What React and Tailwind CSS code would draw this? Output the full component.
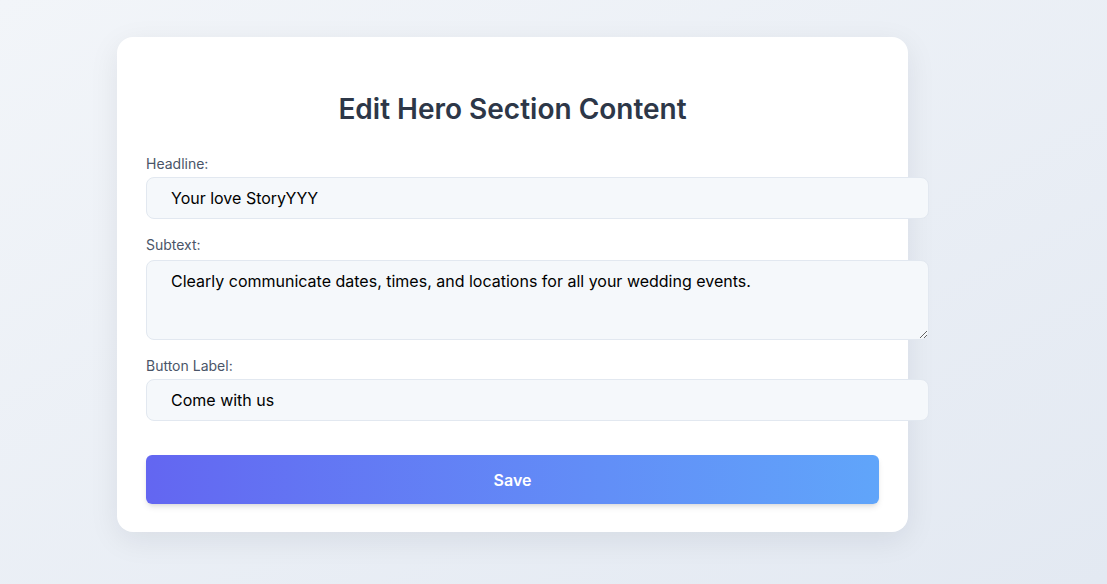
export default function App() {
  const field =
    "box-content w-full px-6 py-2 text-base leading-6 text-black bg-[#f5f8fb] border border-[#e2e8f0] rounded-lg outline-none";
  return (
    <div
      className="min-h-[584px] w-full bg-gradient-to-br from-[#f2f5f9] to-[#e3e9f2] pt-[37px] pl-[117px]"
      style={{ fontFamily: "Inter, 'Noto Sans', sans-serif" }}
    >
      <div className="w-[791px] bg-white rounded-2xl shadow-[0_8px_30px_rgba(15,23,42,0.08)] px-[29px] pt-[54px] pb-[28px]">
        <h2 className="text-center text-[28px] leading-9 font-semibold text-[#2d3748] mb-[27px]">
          Edit Hero Section Content
        </h2>
        <label className="block text-sm leading-5 text-[#4a5568] mb-[3px]">Headline:</label>
        <input className={field} defaultValue="Your love StoryYYY" />
        <label className="block text-sm leading-5 text-[#4a5568] mt-4 mb-[5px]">Subtext:</label>
        <textarea
          className={field + " h-[62px] block resize-y"}
          defaultValue="Clearly communicate dates, times, and locations for all your wedding events."
        />
        <label className="block text-sm leading-5 text-[#4a5568] mt-[16px] mb-[3px]">Button Label:</label>
        <input className={field} defaultValue="Come with us" />
        <button className="mt-[34px] w-full h-[49px] rounded-md bg-gradient-to-r from-[#6366f1] to-[#60a5fa] text-white font-semibold text-base shadow-md">
          Save
        </button>
      </div>
    </div>
  );
}
